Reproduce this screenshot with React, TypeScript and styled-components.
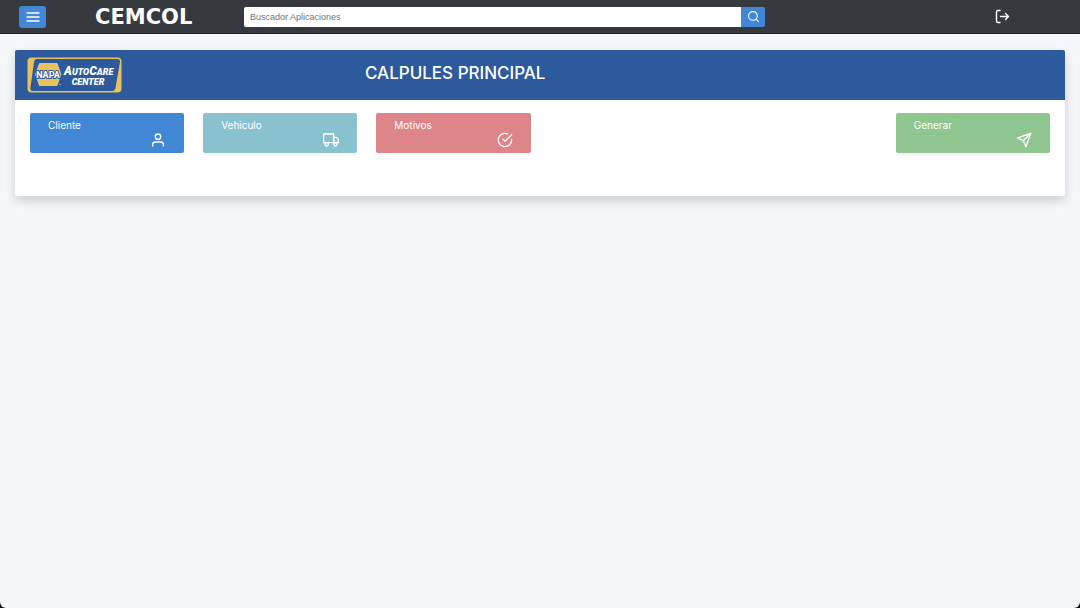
import React from "react";
import styled, { createGlobalStyle } from "styled-components";
import { FiCheckCircle, FiMenu, FiSearch, FiSend, FiTruck, FiUser } from "react-icons/fi";

const GlobalStyle = createGlobalStyle`
  *, *::before, *::after { box-sizing: border-box; }
  html { background: #000; }
  body {
    margin: 0;
    font-family: Inter, "Liberation Sans", sans-serif;
    color: #fff;
  }
  button, input { font: inherit; }
`;

const Page = styled.div`
  min-height: 100vh;
  background: #f5f7fb;
  border-radius: 0 0 6px 6px;
`;

const TopBar = styled.header`
  display: grid;
  grid-template-columns: 225fr 521fr 315fr;
  align-items: center;
  height: 34px;
  padding: 0 0 0 19px;
  background: #363a3e;
  border-bottom: 1px solid #1f2226;
`;

const Brand = styled.div`
  display: flex;
  align-items: center;
  gap: 49px;
`;

const MenuButton = styled.button`
  display: flex;
  align-items: center;
  justify-content: center;
  width: 27px;
  height: 22px;
  padding: 0;
  border: 0;
  border-radius: 3px;
  background: #4287d6;
  color: #fff;
`;

const SearchForm = styled.form`
  display: flex;
  height: 20px;
`;

const SearchInput = styled.input`
  flex: 1;
  min-width: 0;
  padding: 0 6px;
  border: 0;
  border-radius: 2px 0 0 2px;
  background: #fff;
  color: #495057;
  font-family: "Liberation Sans", sans-serif;
  font-size: 9px;
  &::placeholder { color: #6c757d; opacity: 1; }
`;

const SearchButton = styled.button`
  display: flex;
  align-items: center;
  justify-content: center;
  width: 24px;
  padding: 0;
  border: 0;
  border-radius: 0 2px 2px 0;
  background: #4287d6;
  color: #fff;
`;

const LogoutButton = styled.button`
  display: flex;
  justify-self: end;
  margin-right: 70px;
  padding: 0;
  border: 0;
  background: none;
  color: #fff;
`;

const Main = styled.main`
  padding: 16px 15px;
`;

const Card = styled.section`
  background: #fff;
  border-radius: 2px;
  box-shadow: 0 5px 12px rgba(0, 0, 0, 0.17);
`;

const CardHeader = styled.div`
  display: grid;
  grid-template-columns: 1fr 2fr;
  height: 50px;
  padding: 7px 0;
  background: #2c5a9c;
  border-radius: 2px 2px 0 0;
`;

const LogoSlot = styled.div`
  padding-left: 12px;
`;

const Title = styled.h1`
  margin: 0;
  padding-top: 4px;
  font-size: 17px;
  line-height: 24px;
  font-weight: 500;
`;

const Tiles = styled.div`
  display: grid;
  grid-template-columns: repeat(6, 1fr);
  gap: 19px;
  padding: 13px 15px 43px;
`;

const Tile = styled.button<{ $color: string; $last?: boolean }>`
  display: flex;
  flex-direction: column;
  justify-content: space-between;
  height: 40px;
  padding: 5px 18px;
  border: 0;
  border-radius: 2px;
  background: ${(p) => p.$color};
  color: #fff;
  font-size: 10px;
  line-height: 14px;
  text-align: left;
  ${(p) => p.$last && "grid-column: -2;"}
  svg { align-self: flex-end; flex: none; }
`;

const CemcolLogo = () => (
  <svg width="104" height="26" viewBox="0 0 104 26" role="img" aria-label="CEMCOL">
    <text x="0" y="20" fill="#fff" fontFamily="DejaVu Sans, sans-serif" fontWeight="700" fontSize="21">
      CEMCOL
    </text>
  </svg>
);

const NapaLogo = () => (
  <svg width="95" height="36" viewBox="0 0 95 36" role="img" aria-label="NAPA AutoCare Center">
    <rect x="0.5" y="0.5" width="94" height="35" rx="4" fill="#e8c05c" />
    <path d="M10 2H90Q93.500 2 93 5L88.500 31Q88 34 85 34H6Q3 34 3.400 31L7 5Q7.500 2 10 2Z" fill="#2c5a9c" />
    <path d="M12.500 6.500H30L34 17.500L30 28.500H12.500L8.500 17.500Z" fill="#e8c05c" stroke="#f7ebc8" strokeWidth="0.6" />
    <g fontFamily="Roboto, sans-serif" fontWeight="700" fill="#fff">
      <text x="21" y="21" fontSize="9" textAnchor="middle" stroke="#2c5a9c" strokeWidth="2" paintOrder="stroke">
        NAPA
      </text>
      <g fontStyle="italic" fontWeight="900">
        <text x="37" y="18" fontSize="12">
          A<tspan fontSize="9">UTO</tspan>C<tspan fontSize="9">ARE</tspan>
        </text>
        <text x="61" y="28" fontSize="9" textAnchor="middle">CENTER</text>
      </g>
    </g>
    <circle cx="33" cy="27.500" r="0.600" fill="#fff" />
  </svg>
);

const LogoutIcon = () => (
  <svg width="15" height="15" viewBox="0 0 15 15" fill="none" stroke="currentColor" strokeWidth="1.400" strokeLinecap="round" strokeLinejoin="round" aria-hidden="true">
    <path d="M5 1.500H3Q1.500 1.500 1.500 3V12Q1.500 13.500 3 13.500H5" />
    <path d="M5.500 7.500H13.500M10.500 4.500L13.500 7.500L10.500 10.500" />
  </svg>
);

const sections = [
  { label: "Cliente", color: "#4287d6", Icon: FiUser },
  { label: "Vehiculo", color: "#8ac1cf", Icon: FiTruck },
  { label: "Motivos", color: "#dd8589", Icon: FiCheckCircle },
  { label: "Generar", color: "#8fc58e", Icon: FiSend, last: true },
];

export default function App() {
  return (
    <>
      <GlobalStyle />
      <Page>
        <TopBar>
          <Brand>
            <MenuButton type="button" aria-label="Menu">
              <FiMenu size={16} />
            </MenuButton>
            <CemcolLogo />
          </Brand>
          <SearchForm role="search" onSubmit={(e) => e.preventDefault()}>
            <SearchInput type="text" aria-label="Buscador Aplicaciones" placeholder="Buscador Aplicaciones" />
            <SearchButton type="submit" aria-label="Buscar">
              <FiSearch size={13} />
            </SearchButton>
          </SearchForm>
          <LogoutButton type="button" aria-label="Salir">
            <LogoutIcon />
          </LogoutButton>
        </TopBar>
        <Main>
          <Card>
            <CardHeader>
              <LogoSlot>
                <NapaLogo />
              </LogoSlot>
              <Title>CALPULES PRINCIPAL</Title>
            </CardHeader>
            <Tiles>
              {sections.map(({ label, color, Icon, last }) => (
                <Tile key={label} type="button" $color={color} $last={last}>
                  {label}
                  <Icon size={16} aria-hidden="true" />
                </Tile>
              ))}
            </Tiles>
          </Card>
        </Main>
      </Page>
    </>
  );
}
